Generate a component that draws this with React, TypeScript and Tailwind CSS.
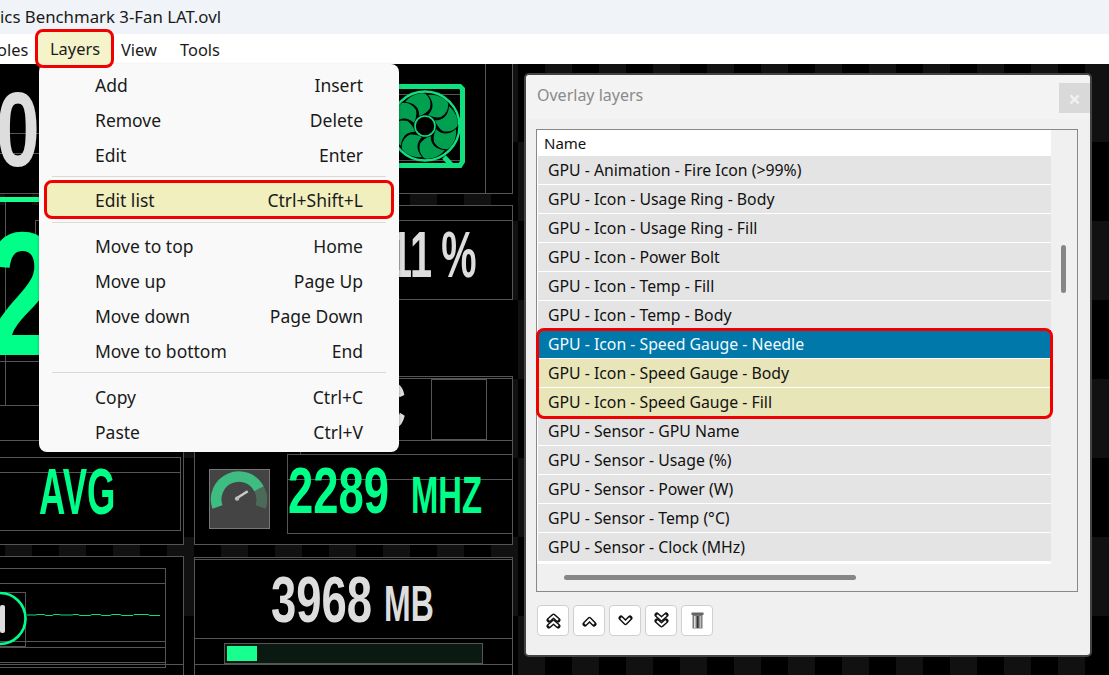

const rects = [
  "left-[-2px] top-[60px] w-[42px] h-[134px]",
  "left-[-2px] top-[133px] w-[42px] h-[21px]",
  "left-[300px] top-[60px] w-[186px] h-[134px]",
  "left-[300px] top-[60px] w-[213px] h-[134px]",
  "left-[397px] top-[94px] w-[64px] h-[67px]",
  "left-[194px] top-[205px] w-[319px] h-[95px]",
  "left-[35px] top-[220px] w-[478px] h-[80px]",
  "left-[5px] top-[201px] w-[100px] h-[205px]",
  "left-[-2px] top-[361px] w-[100px] h-[45px]",
  "left-[300px] top-[376px] w-[213px] h-[79px]",
  "left-[300px] top-[378px] w-[213px] h-[77px]",
  "left-[431px] top-[379px] w-[56px] h-[61px]",
  "left-[287px] top-[454px] w-[226px] h-[80px]",
  "left-[287px] top-[454px] w-[226px] h-[26px]",
  "left-[194px] top-[440px] w-[319px] h-[105px]",
  "left-[-2px] top-[457px] w-[183px] h-[74px]",
  "left-[-2px] top-[457px] w-[183px] h-[16px]",
  "left-[-2px] top-[440px] w-[186px] h-[105px]",
  "left-[194px] top-[557px] w-[319px] h-[130px]",
  "left-[194px] top-[559px] w-[319px] h-[80px]",
  "left-[194px] top-[638px] w-[319px] h-[27px]",
  "left-[-2px] top-[556px] w-[186px] h-[130px]",
  "left-[-2px] top-[568px] w-[168px] h-[100px]",
  "left-[-2px] top-[583px] w-[168px] h-[59px]",
  "left-[-2px] top-[647px] w-[168px] h-[16px]",
  "left-[-2px] top-[664px] w-[186px] h-[20px]",
  "left-[-2px] top-[592px] w-[28px] h-[55px]",
];
const blacks = [
  "left-0 top-[64px] w-[183px] h-[129px]",
  "left-[194px] top-[64px] w-[318px] h-[129px]",
  "left-0 top-[205px] w-[183px] h-[339px]",
  "left-[194px] top-[205px] w-[318px] h-[339px]",
  "left-0 top-[556px] w-[183px] h-[119px]",
  "left-[194px] top-[557px] w-[318px] h-[118px]",
];
const layers: [string, string][] = [
  ["GPU - Animation - Fire Icon (>99%)", "n"],
  ["GPU - Icon - Usage Ring - Body", "n"],
  ["GPU - Icon - Usage Ring - Fill", "n"],
  ["GPU - Icon - Power Bolt", "n"],
  ["GPU - Icon - Temp - Fill", "n"],
  ["GPU - Icon - Temp - Body", "n"],
  ["GPU - Icon - Speed Gauge - Needle", "s"],
  ["GPU - Icon - Speed Gauge - Body", "y"],
  ["GPU - Icon - Speed Gauge - Fill", "y"],
  ["GPU - Sensor - GPU Name", "n"],
  ["GPU - Sensor - Usage (%)", "n"],
  ["GPU - Sensor - Power (W)", "n"],
  ["GPU - Sensor - Temp (°C)", "n"],
  ["GPU - Sensor - Clock (MHz)", "n"],
];
const rowTone: Record<string, string> = {
  n: "bg-[#e4e4e4] text-[#111]",
  s: "bg-[#0078aa] text-[#f2fbff]",
  y: "bg-[#e8e5b8] text-[#111]",
};

function Item({ label, keys }: { label: string; keys: string }) {
  return (
    <div className="flex h-[35px] items-center justify-between pl-[56px] pr-[36px] pt-px">
      <span>{label}</span>
      <span>{keys}</span>
    </div>
  );
}

function Sep({ cls }: { cls: string }) {
  return <div className={`mx-[13px] h-px bg-[#d9d9d9] ${cls}`} />;
}

function ToolIcon({ d, w, h }: { d: string[]; w: number; h: number }) {
  return (
    <svg width={w} height={h} viewBox={`0 0 ${w} ${h}`}>
      {d.map((p) => (
        <path key={p} d={p} fill="none" stroke="#111" strokeWidth="5" strokeLinejoin="round" strokeLinecap="round" />
      ))}
      {d.map((p) => (
        <path key={p + "w"} d={p} fill="none" stroke="#fff" strokeWidth="2" strokeLinejoin="miter" />
      ))}
    </svg>
  );
}

function Fan() {
  const angles = [0, 45, 90, 135, 180, 225, 270, 315];
  return (
    <svg className="absolute left-[380px] top-[80px]" width="90" height="92" viewBox="-45 -46 90 92">
      <path d="M-45,-39.5 H35 L37.5,-37 V35.5 L35,39.5 H27 L19,31" fill="none" stroke="#11e07f" strokeWidth="5" />
      <path d="M-45,39.5 H27" stroke="#11e07f" strokeWidth="5" fill="none" />
      <circle cx="0" cy="0" r="34.5" fill="#000" stroke="#11e07f" strokeWidth="2.4" />
      {angles.map((a) => (
        <path
          key={a}
          transform={`rotate(${a})`}
          d="M3,-11 C9,-17 9,-24 3,-31 C10,-32 19,-29 23,-23 C24,-17 21,-12 16,-9 C12,-8 7,-9 3,-11 Z"
          fill="#00a050"
        />
      ))}
      <circle cx="0" cy="0" r="10" fill="#000" stroke="#11e07f" strokeWidth="1.6" />
    </svg>
  );
}

function Gauge() {
  return (
    <svg className="absolute left-[209px] top-[469px] border border-[#777]" width="61" height="60" viewBox="0 0 61 60">
      <rect width="61" height="60" fill="#444" />
      <path d="M50.6,19.3 A23.5,23.5 0 0 1 52.3,38.2" fill="none" stroke="#4c6a5a" strokeWidth="11" />
      <path d="M7.7,38.2 A23.5,23.5 0 0 1 50.6,19.3" fill="none" stroke="#3fbc82" strokeWidth="11" />
      <path d="M28,29 L39,22" stroke="#ccc" strokeWidth="2.6" />
      <circle cx="28" cy="29.6" r="2.3" fill="#bbb" />
    </svg>
  );
}

export default function App() {
  return (
    <div className="relative flex h-[675px] w-[1109px] flex-col overflow-hidden bg-black font-['Noto_Sans',sans-serif] text-[#1a1a1a]">
      <div className="relative z-10 flex h-[34px] items-center bg-[#f0f4f9] text-[16.8px] whitespace-nowrap">ics Benchmark 3-Fan LAT.ovl</div>
      <div className="relative z-10 flex h-[30px] items-center bg-white pt-[2px] text-[16.4px]">
        <span className="ml-[-3px] w-[38px]">oles</span>
        <span className="ml-[15px] w-[71px]">Layers</span>
        <span className="w-[59px]">View</span>
        <span>Tools</span>
      </div>

      <div className="relative flex-1 bg-[conic-gradient(#111_25%,#000_0_50%,#111_0_75%,#000_0)] bg-[length:54px_158px] bg-[position:-22px_-1px]" />

      {blacks.map((c) => (
        <div key={c} className={`absolute bg-black ${c}`} />
      ))}
      {rects.map((c) => (
        <div key={c} className={`absolute border border-[#555] ${c}`} />
      ))}

      <div className="absolute left-0 top-[197px] h-[5px] w-[39px] bg-[#19ff8f]" />
      <span className="absolute left-[-4px] top-[77px] origin-top-left scale-x-[0.75] font-['Liberation_Sans',sans-serif] text-[105px] leading-none font-bold text-[#ddd]">0</span>
      <span className="absolute left-[-14px] top-[206px] origin-top-left scale-x-[0.75] font-['Liberation_Sans',sans-serif] text-[176px] leading-none font-bold text-[#00ff88]">2</span>
      <span className="absolute left-[390px] top-[223px] origin-top-left scale-x-[0.62] font-['Liberation_Sans',sans-serif] text-[64px] leading-none font-bold whitespace-nowrap text-[#ddd]">
        11<span className="ml-[15px]">%</span>
      </span>
      <span className="absolute left-[378px] top-[374px] origin-top-left scale-x-[0.6] font-['Liberation_Sans',sans-serif] text-[64px] leading-none font-bold text-[#ddd]">C</span>
      <span className="absolute left-[39px] top-[460px] origin-top-left scale-x-[0.57] font-['Liberation_Sans',sans-serif] text-[64px] leading-none font-bold text-[#00ff88]">AVG</span>
      <span className="absolute left-[288px] top-[459px] origin-top-left scale-x-[0.71] font-['Liberation_Sans',sans-serif] text-[64px] leading-none font-bold text-[#00ff88]">2289</span>
      <span className="absolute left-[411px] top-[469px] origin-top-left scale-x-[0.63] font-['Liberation_Sans',sans-serif] text-[52px] leading-none font-bold text-[#00ff88]">MHZ</span>
      <span className="absolute left-[271px] top-[568px] origin-top-left scale-x-[0.71] font-['Liberation_Sans',sans-serif] text-[64px] leading-none font-bold text-[#ddd]">3968</span>
      <span className="absolute left-[384px] top-[579px] origin-top-left scale-x-[0.64] font-['Liberation_Sans',sans-serif] text-[50px] leading-none font-bold text-[#ddd]">MB</span>

      <Fan />
      <Gauge />

      <div className="absolute left-[224px] top-[643px] flex h-[21px] w-[259px] items-center border border-[#555] bg-[#0a1a12] pl-[2px]">
        <div className="h-[15px] w-[30px] bg-[#19ff8f]" />
      </div>

      <svg className="absolute left-0 top-[590px]" width="165" height="60" viewBox="0 0 165 60">
        <circle cx="0" cy="28.5" r="25.5" fill="none" stroke="#00ff88" strokeWidth="2.6" />
        <rect x="0" y="15" width="5" height="28" rx="2" fill="#ddd" />
        <path
          d="M27,25 H36 L37,24.5 H44 L46,25.5 H52 L54,24.5 H59 L61,25 H72 L74,24.5 H78 L80,25.5 H90 L92,24.5 H100 L102,25.5 H110 L112,24.5 H120 L122,25.5 H133 L134,24.5 H148 L150,25.5 H160"
          fill="none"
          stroke="#0fdc7a"
          strokeWidth="1"
        />
      </svg>

      {/* Layers menu */}
      <div className="absolute left-[39px] top-[64px] z-20 h-[388px] w-[360px] rounded-lg bg-[#f9f9f9] pt-[3px] text-[17.5px] text-[#1a1a1a] shadow-[0_1px_3px_rgba(0,0,0,0.3)]">
        <Item label="Add" keys="Insert" />
        <Item label="Remove" keys="Delete" />
        <Item label="Edit" keys="Enter" />
        <Sep cls="mt-[4px] mb-[3px]" />
        <div className="mx-[5px] flex h-[39px] items-center justify-between rounded-lg border-[3px] border-[#f00000] bg-[#f1efbd] pl-[48px] pr-[28px] pt-px">
          <span>Edit list</span>
          <span>Ctrl+Shift+L</span>
        </div>
        <Sep cls="mt-[3px] mb-[5px]" />
        <Item label="Move to top" keys="Home" />
        <Item label="Move up" keys="Page Up" />
        <Item label="Move down" keys="Page Down" />
        <Item label="Move to bottom" keys="End" />
        <Sep cls="mt-[4px] mb-[6px]" />
        <Item label="Copy" keys="Ctrl+C" />
        <Item label="Paste" keys="Ctrl+V" />
      </div>

      <div className="absolute left-[35px] top-[29px] z-20 flex h-[39px] w-[79px] items-center rounded-lg border-[3px] border-[#f00000] bg-[#f4f3c9] pl-[12px] pt-[2px] text-[16.4px]">
        Layers
      </div>

      {/* Overlay layers dialog */}
      <div className="absolute left-[524px] top-[73px] flex h-[584px] w-[568px] flex-col rounded-[5px] border-2 border-[#444] bg-[#f0f0f0]">
        <div className="flex h-[44px] items-start justify-between rounded-t-[4px] bg-[#f3f3f3] pl-[11px]">
          <span className="mt-[8px] text-[16px] text-[#8a8a8a]">Overlay layers</span>
          <span className="mt-[8px] flex h-[30px] w-[31px] items-center justify-center bg-[#d9d9d9] text-[22px] leading-none font-bold text-[#f1f1f1]">×</span>
        </div>
        <div className="relative mt-[10px] ml-[10px] flex h-[463px] w-[542px] flex-col border border-[#888] bg-[#f0f0f0]">
          <div className="flex h-[434px]">
            <div className="h-[434px] w-[514px] overflow-hidden bg-white pl-px text-[15.8px]">
              <div className="flex h-[26px] items-center pl-[6px] text-[15px] text-[#111]">Name</div>
              {layers.map(([name, tone]) => (
                <div key={name} className={`mb-px flex h-[28px] items-center pl-[10px] pt-[2px] ${rowTone[tone]}`}>
                  {name}
                </div>
              ))}
            </div>
            <div className="pl-[10px] pt-[115px]">
              <div className="h-[48px] w-[5px] rounded-full bg-[#868686]" />
            </div>
          </div>
          <div className="mt-[11px] ml-[27px] h-[5px] w-[292px] rounded-full bg-[#868686]" />
          <div className="absolute left-[-1px] top-[198px] h-[91px] w-[517px] rounded-lg border-[3px] border-[#f00000]" />
        </div>
        <div className="mt-[13px] ml-[11px] flex gap-[4px]">
          <button className="flex h-[31px] w-[32px] items-center justify-center rounded-[4px] border border-[#cfcfcf] bg-white">
            <ToolIcon w={15} h={17} d={["M3,8 L7.5,4 L12,8", "M3,14 L7.5,10 L12,14"]} />
          </button>
          <button className="flex h-[31px] w-[32px] items-center justify-center rounded-[4px] border border-[#cfcfcf] bg-white">
            <ToolIcon w={15} h={12} d={["M3,9 L7.5,4.5 L12,9"]} />
          </button>
          <button className="flex h-[31px] w-[32px] items-center justify-center rounded-[4px] border border-[#cfcfcf] bg-white">
            <ToolIcon w={15} h={12} d={["M3,3 L7.5,7.5 L12,3"]} />
          </button>
          <button className="flex h-[31px] w-[32px] items-center justify-center rounded-[4px] border border-[#cfcfcf] bg-white">
            <ToolIcon w={15} h={17} d={["M3,3 L7.5,7 L12,3", "M3,9 L7.5,13 L12,9"]} />
          </button>
          <button className="flex h-[31px] w-[32px] items-center justify-center rounded-[4px] border border-[#cfcfcf] bg-white">
            <svg width="13" height="17" viewBox="0 0 13 17">
              <rect x="0.5" y="0.5" width="12" height="2.5" fill="#666" />
              <rect x="1.5" y="3" width="10" height="13.5" fill="#777" />
              <rect x="3" y="4" width="1.6" height="12" fill="#ddd" />
              <rect x="6" y="4" width="1.4" height="12" fill="#333" />
              <rect x="8.6" y="4" width="1.6" height="12" fill="#bbb" />
            </svg>
          </button>
        </div>
      </div>
    </div>
  );
}
